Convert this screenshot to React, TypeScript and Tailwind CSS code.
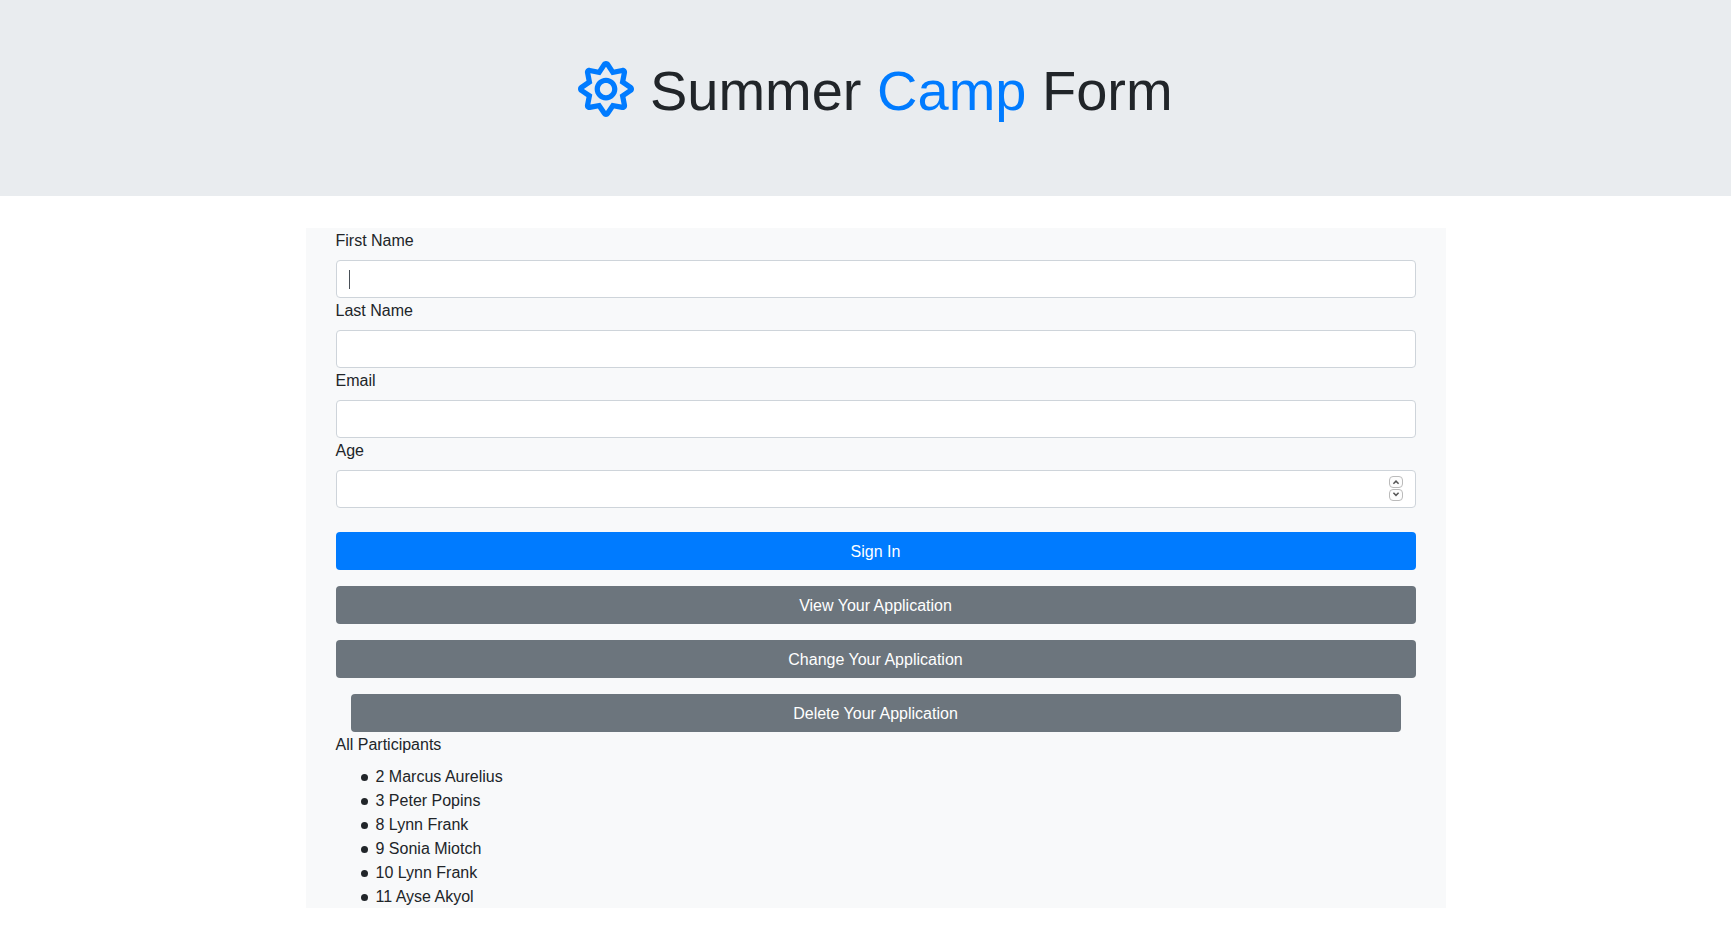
import React from "react";
import { FaRegSun } from "react-icons/fa";

const inputClass =
  "block w-full h-[38px] rounded border border-[#ced4da] bg-white px-3 py-1.5 text-base text-[#495057] outline-none focus:border-[#80bdff] [appearance:textfield] [&::-webkit-inner-spin-button]:appearance-none [&::-webkit-outer-spin-button]:appearance-none";

const buttonClass =
  "block w-full h-[38px] rounded px-3 pt-0.5 text-center text-base text-white cursor-pointer";

const participants = [
  { id: 2, name: "Marcus Aurelius" },
  { id: 3, name: "Peter Popins" },
  { id: 8, name: "Lynn Frank" },
  { id: 9, name: "Sonia Miotch" },
  { id: 10, name: "Lynn Frank" },
  { id: 11, name: "Ayse Akyol" },
];

function Field({
  id,
  label,
  type,
  children,
}: {
  id: string;
  label: string;
  type: string;
  children?: React.ReactNode;
}) {
  return (
    <div>
      <label htmlFor={id} className="mb-1.5 block w-fit leading-[26px]">
        {label}
      </label>
      <div className="relative">
        <input id={id} name={id} type={type} className={inputClass} />
        {children}
      </div>
    </div>
  );
}

function Stepper({ target }: { target: string }) {
  const step = (up: boolean) => {
    const el = document.getElementById(target) as HTMLInputElement | null;
    if (up) el?.stepUp();
    else el?.stepDown();
  };
  const cls =
    "flex h-3 w-[14px] items-center justify-center rounded border border-[#bbbbbb] bg-[#fcfcfc]";
  return (
    <div className="absolute top-1.5 right-[13px] flex flex-col gap-px">
      <button type="button" aria-label="Increase age" className={cls} onClick={() => step(true)}>
        <svg width="8" height="6" viewBox="0 0 8 6" fill="none" stroke="#555" strokeWidth="1.5">
          <path d="M1.4 4.7 4 2.1l2.6 2.6" />
        </svg>
      </button>
      <button type="button" aria-label="Decrease age" className={cls} onClick={() => step(false)}>
        <svg width="8" height="6" viewBox="0 0 8 6" fill="none" stroke="#555" strokeWidth="1.5">
          <path d="M1.4 .8 4 3.4 6.6 .8" />
        </svg>
      </button>
    </div>
  );
}

export default function App() {
  return (
    <div className="bg-white font-['Liberation_Sans',Arial,sans-serif] text-base text-[#212529]">
      <header className="mb-8 bg-[#e9ecef] pt-[57px] pb-[72px] pl-5">
        <h1 className="text-center text-[56px] leading-[67px] font-normal">
          <FaRegSun className="inline-block h-[1em] w-[1em] align-[-0.125em] text-[#007bff]" aria-hidden="true" />{" "}
          Summer <span className="text-[#007bff]">Camp</span> Form
        </h1>
      </header>
      <main className="pl-5">
        <div className="mx-auto max-w-[1140px] bg-[#f8f9fa] px-[30px]">
          <form onSubmit={(e) => e.preventDefault()}>
            <Field id="firstName" label="First Name" type="text">
              <span
                aria-hidden="true"
                className="pointer-events-none absolute top-2.5 left-[13px] h-[19px] w-px bg-[#495057]"
              />
            </Field>
            <Field id="lastName" label="Last Name" type="text" />
            <Field id="email" label="Email" type="email" />
            <Field id="age" label="Age" type="number">
              <Stepper target="age" />
            </Field>
            <div className="mt-6 flex flex-col gap-4">
              <button type="submit" className={`${buttonClass} bg-[#007bff]`}>
                Sign In
              </button>
              <button type="button" className={`${buttonClass} bg-[#6c757d]`}>
                View Your Application
              </button>
              <button type="button" className={`${buttonClass} bg-[#6c757d]`}>
                Change Your Application
              </button>
              <div className="px-[15px]">
                <button type="button" className={`${buttonClass} bg-[#6c757d]`}>
                  Delete Your Application
                </button>
              </div>
            </div>
          </form>
          <h2 className="mb-1.5 leading-[26px]">All Participants</h2>
          <ul className="pl-[25px]">
            {participants.map((p) => (
              <li
                key={p.id}
                className="flex h-6 items-center pt-0.5 before:mr-2 before:size-[7px] before:rounded-full before:bg-[#212529]"
              >
                {p.id} {p.name}
              </li>
            ))}
          </ul>
        </div>
      </main>
    </div>
  );
}
